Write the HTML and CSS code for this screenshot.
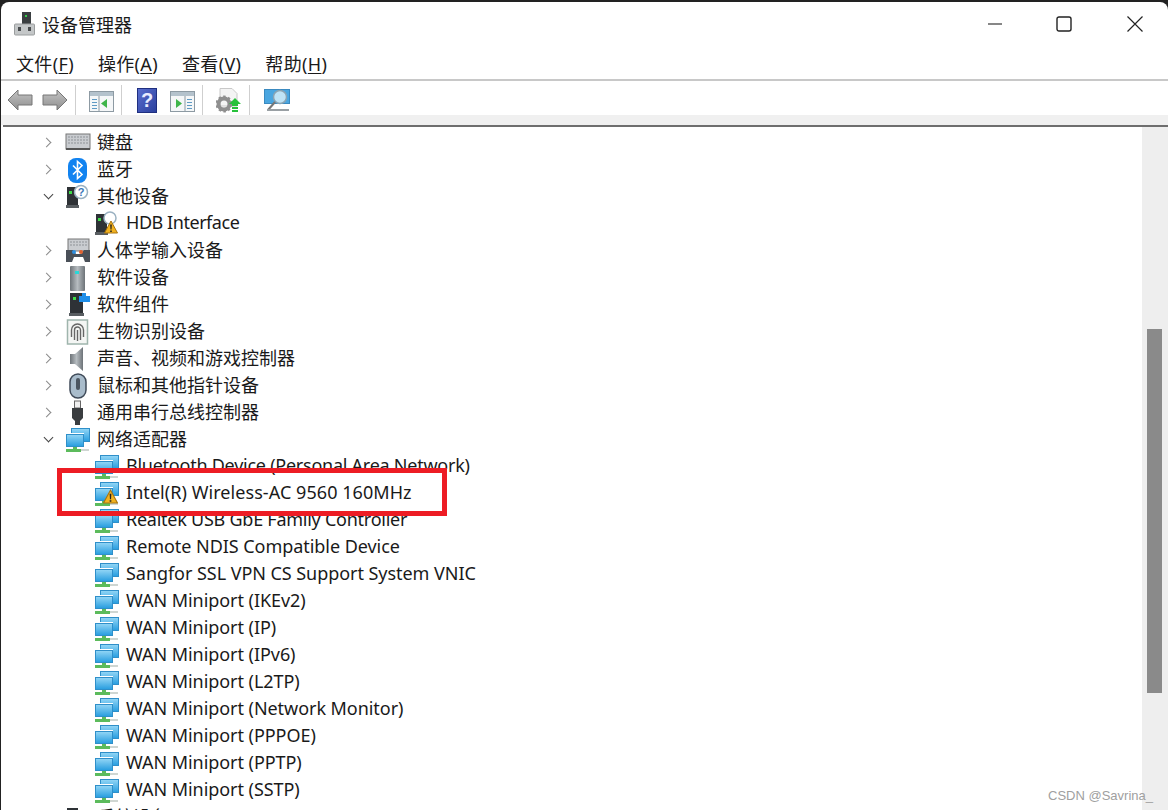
FILE: index.html
```html
<!DOCTYPE html>
<html lang="zh">
<head>
    <meta http-equiv="Content-Type" content="text/html;charset=UTF-8"/>
    <title>设备管理器</title>
    <link rel="stylesheet" href="styles.css">
</head>
<body>
<svg class="defs" width="0" height="0">
    <defs>
        <linearGradient id="screen" x1="0" y1="0" x2="0" y2="1">
            <stop offset="0" stop-color="#8fd4f5"/>
            <stop offset="1" stop-color="#2b9fe0"/>
        </linearGradient>
        <linearGradient id="metal" x1="0" y1="0" x2="1" y2="0">
            <stop offset="0" stop-color="#6d7378"/>
            <stop offset=".5" stop-color="#b6bcc0"/>
            <stop offset="1" stop-color="#6d7378"/>
        </linearGradient>
        <linearGradient id="arrow" x1="0" y1="0" x2="0" y2="1">
            <stop offset="0" stop-color="#c4c4c4"/>
            <stop offset="1" stop-color="#8e8e8e"/>
        </linearGradient>
        <linearGradient id="helpblue" x1="0" y1="0" x2="1" y2="1">
            <stop offset="0" stop-color="#5a6fd0"/>
            <stop offset="1" stop-color="#2a3f9c"/>
        </linearGradient>
        <symbol id="i-net" viewBox="0 0 26 26">
            <rect x="6" y="1" width="19" height="14" fill="#2f8fc9"/>
            <rect x="7" y="2" width="17" height="12" fill="url(#screen)"/>
            <rect x="1" y="6" width="18" height="14" fill="#fff"/>
            <rect x="1" y="7" width="18" height="13" fill="#2f8fc9"/>
            <rect x="2" y="8" width="16" height="11" fill="url(#screen)"/>
            <path d="M8 20h4v2h4v3H1v-3h7z" fill="#5cbb5c"/>
            <path d="M16 22h8v2h-8z" fill="#cfd6d2"/>
        </symbol>
        <symbol id="i-warn" viewBox="0 0 14 13">
            <path d="M7 .5 13.500 12.500H.5z" fill="#f2b21f" stroke="#a87410"/>
            <path d="M6.200 4h1.600l-.3 5h-1zM6.200 10h1.600v1.500H6.200z" fill="#222"/>
        </symbol>
        <symbol id="i-tower" viewBox="0 0 26 26">
            <path d="M2 3h11v18H2z" fill="#2e3236"/>
            <path d="M1 21h13v3H1z" fill="#585d61"/>
            <rect x="4" y="7" width="3" height="3" fill="#3fdc4a"/>
        </symbol>
        <symbol id="i-back" viewBox="0 0 26 22">
            <path d="M1 11 11 1v5h14v10H11v5z" fill="url(#arrow)" stroke="#777"/>
        </symbol>
        <symbol id="i-next" viewBox="0 0 26 22">
            <path d="M25 11 15 1v5H1v10h14v5z" fill="url(#arrow)" stroke="#777"/>
        </symbol>
    </defs>
</svg>

<div class="window">
    <div class="titlebar">
        <svg class="app-icon" width="22" height="24" viewBox="0 0 22 24">
            <rect x="8" y="0" width="9" height="12" fill="#3a3e40"/>
            <rect x="11" y="3" width="2" height="2" fill="#35d04a"/>
            <rect x=".5" y="12" width="20" height="11" rx="1" fill="#c4c7c8" stroke="#9a9d9e"/>
            <rect x="4" y="15" width="3" height="4" fill="#4a4d4f"/>
            <rect x="14" y="15" width="3" height="4" fill="#4a4d4f"/>
        </svg>
        <span class="title">设备管理器</span>
        <div class="win-buttons">
            <svg class="win-min" width="16" height="16" viewBox="0 0 16 16"><path d="M1 8h14" stroke="#111" stroke-width="1.200"/></svg>
            <svg width="16" height="16" viewBox="0 0 16 16"><rect x="1" y="1" width="14" height="14" rx="2" fill="none" stroke="#222" stroke-width="1.400"/></svg>
            <svg width="16" height="16" viewBox="0 0 16 16"><path d="M.5.5l15 15M15.500.5l-15 15" stroke="#222" stroke-width="1.200"/></svg>
        </div>
    </div>

    <div class="menubar">
        <span>文件(<u>F</u>)</span>
        <span>操作(<u>A</u>)</span>
        <span>查看(<u>V</u>)</span>
        <span>帮助(<u>H</u>)</span>
    </div>

    <div class="toolbar">
        <svg class="tool" width="26" height="22"><use href="#i-back"/></svg>
        <svg class="tool tool-next" width="26" height="22"><use href="#i-next"/></svg>
        <i class="sep"></i>
        <svg class="tool tool-pane" width="25" height="21" viewBox="0 0 25 21">
            <rect x=".5" y=".5" width="24" height="20" fill="#f5f7f8" stroke="#8d9aa3"/>
            <rect x="1" y="1" width="23" height="4" fill="#b4c2cc"/>
            <path d="M3 8h5v1H3zM3 11h5v1H3zM3 14h5v1H3zM3 17h5v1H3z" fill="#5f9ac4"/>
            <path d="M10 5v15" stroke="#8d9aa3"/>
            <path d="M18 8v9l-6-4.500z" fill="#3fb54a"/>
        </svg>
        <i class="sep"></i>
        <svg class="tool tool-help" width="20" height="25" viewBox="0 0 20 25">
            <rect x=".5" y=".5" width="19" height="24" fill="url(#helpblue)" stroke="#1f2f80"/>
            <text x="10" y="19" text-anchor="middle" class="help-mark">?</text>
        </svg>
        <svg class="tool tool-pane tool-after" width="25" height="21" viewBox="0 0 25 21">
            <rect x=".5" y=".5" width="24" height="20" fill="#f5f7f8" stroke="#8d9aa3"/>
            <rect x="1" y="1" width="23" height="4" fill="#b4c2cc"/>
            <path d="M17 8h5v1h-5zM17 11h5v1h-5zM17 14h5v1h-5zM17 17h5v1h-5z" fill="#5f9ac4"/>
            <path d="M15 5v15" stroke="#8d9aa3"/>
            <path d="M6 8v9l6-4.500z" fill="#3fb54a"/>
        </svg>
        <i class="sep"></i>
        <svg class="tool" width="26" height="25" viewBox="0 0 26 25">
            <path d="M4 .5h12l5 5V18H4z" fill="#f4f4f4" stroke="#c8c8c8"/>
            <circle cx="8" cy="16" r="5.500" fill="none" stroke="#8f8f8f" stroke-width="4"/>
            <circle cx="8" cy="16" r="7.500" fill="none" stroke="#8f8f8f" stroke-width="2" stroke-dasharray="2.500 2.400"/>
            <path d="M19 10l6 6h-3v2h-6v-2h-3z" fill="#28c13c"/>
            <path d="M16 19h6v2h-6zM16 22h6v2h-6z" fill="#28c13c"/>
        </svg>
        <i class="sep"></i>
        <svg class="tool tool-screen" width="26" height="24" viewBox="0 0 26 24">
            <rect x=".5" y=".5" width="25" height="14" fill="#4aa6e0" stroke="#3a8ac0"/>
            <circle cx="16" cy="8" r="6.500" fill="#bfe3f6" stroke="#8aa4b4" stroke-width="1.500"/>
            <path d="M11 13l-7 8" stroke="#777" stroke-width="2"/>
            <path d="M3 21h22" stroke="#9aa0a4" stroke-width="2"/>
        </svg>
    </div>
    <div class="strip"></div>

    <div class="content">
        <div class="tree">
            <div class="row"><i class="toggle closed"></i><svg class="icon" viewBox="0 0 26 26"><rect x="1" y="4" width="24" height="15" fill="#c9ccd0" stroke="#777"/><path d="M3 7h20M3 10h20M3 13h20" stroke="#8e9297" stroke-dasharray="2 1"/><rect x="1" y="18" width="24" height="2" fill="#555"/></svg><span>键盘</span></div>
            <div class="row"><i class="toggle closed"></i><svg class="icon" viewBox="0 0 26 26"><rect x="3" y="1" width="19" height="25" rx="8" fill="#1283f0"/><path d="M8 8.500l9 9-4.500 4V4.500l4.500 4-9 9" fill="none" stroke="#fff" stroke-width="1.600"/></svg><span>蓝牙</span></div>
            <div class="row"><i class="toggle open"></i><svg class="icon" viewBox="0 0 26 26"><use href="#i-tower" width="26" height="26"/><circle cx="16" cy="8" r="6.500" fill="#fff" stroke="#9bb2c2" stroke-width="1.500"/><text x="16" y="12" text-anchor="middle" class="mini-mark">?</text></svg><span>其他设备</span></div>
            <div class="row child"><svg class="icon" viewBox="0 0 26 26"><use href="#i-tower" width="26" height="26"/><circle cx="16" cy="7" r="6" fill="#fff" stroke="#9bb2c2" stroke-width="1.500"/><use href="#i-warn" x="10" y="9" width="14" height="14"/></svg><span class="tighter">HDB Interface</span></div>
            <div class="row"><i class="toggle closed"></i><svg class="icon" viewBox="0 0 26 26"><rect x="3" y="1" width="21" height="12" fill="#c9ccd0" stroke="#777"/><path d="M5 4h17M5 7h17" stroke="#8e9297" stroke-dasharray="2 1"/><path d="M1 24V12h7l3 4h5l3-4h6v12h-5l-2-5h-9l-2 5z" fill="#4a5058"/><circle cx="9" cy="14" r="2" fill="#2f8fe0"/><circle cx="16" cy="14" r="2" fill="#e0602f"/></svg><span>人体学输入设备</span></div>
            <div class="row"><i class="toggle closed"></i><svg class="icon" viewBox="0 0 26 26"><rect x="5" y="1" width="15" height="25" rx="1" fill="url(#metal)"/><rect x="10" y="6" width="4" height="3" fill="#28d8d8"/></svg><span>软件设备</span></div>
            <div class="row"><i class="toggle closed"></i><svg class="icon" viewBox="0 0 26 26"><path d="M5 1h13v20H5z" fill="#2e3236"/><path d="M4 21h15v3H4z" fill="#585d61"/><rect x="8" y="5" width="3" height="3" fill="#3fdc4a"/><path d="M14 4h3V1h4v3h4v6H14z" fill="#1f8ee8"/></svg><span>软件组件</span></div>
            <div class="row"><i class="toggle closed"></i><svg class="icon" viewBox="0 0 26 26"><rect x="2.500" y="1" width="20" height="24" fill="#f4f6f4" stroke="#9fb5ad" stroke-width="1.500"/><path d="M6.500 18v-7a6 6 0 0 1 12 0v7M9.500 21v-10a3 3 0 0 1 6 0v10M12.500 22V11" fill="none" stroke="#666" stroke-width="1.400"/></svg><span>生物识别设备</span></div>
            <div class="row"><i class="toggle closed"></i><svg class="icon" viewBox="0 0 26 26"><path d="M5 8h5l8-7v24l-8-7H5z" fill="url(#metal)"/></svg><span>声音、视频和游戏控制器</span></div>
            <div class="row"><i class="toggle closed"></i><svg class="icon" viewBox="0 0 26 26"><rect x="5" y="1" width="16" height="24" rx="8" fill="#a9bccb" stroke="#3f4a58" stroke-width="1.500"/><rect x="11" y="5" width="4" height="12" rx="2" fill="#4b5560"/></svg><span>鼠标和其他指针设备</span></div>
            <div class="row"><i class="toggle closed"></i><svg class="icon" viewBox="0 0 26 26"><rect x="9.500" y="1" width="6" height="7" fill="#f0f0f0" stroke="#666"/><path d="M7 8h11v10l-3 3v4h-5v-4l-3-3z" fill="#3a3d40"/></svg><span>通用串行总线控制器</span></div>
            <div class="row"><i class="toggle open"></i><svg class="icon"><use href="#i-net"/></svg><span>网络适配器</span></div>
            <div class="row child"><svg class="icon"><use href="#i-net"/></svg><span class="tight">Bluetooth Device (Personal Area Network)</span></div>
            <div class="row child"><svg class="icon" viewBox="0 0 26 26"><use href="#i-net" width="26" height="26"/><use href="#i-warn" x="9" y="8" width="15" height="15"/></svg><span class="wide">Intel(R) Wireless-AC 9560 160MHz</span></div>
            <div class="row child"><svg class="icon"><use href="#i-net"/></svg><span class="tight">Realtek USB GbE Family Controller</span></div>
            <div class="row child"><svg class="icon"><use href="#i-net"/></svg><span>Remote NDIS Compatible Device</span></div>
            <div class="row child"><svg class="icon"><use href="#i-net"/></svg><span>Sangfor SSL VPN CS Support System VNIC</span></div>
            <div class="row child"><svg class="icon"><use href="#i-net"/></svg><span>WAN Miniport (IKEv2)</span></div>
            <div class="row child"><svg class="icon"><use href="#i-net"/></svg><span>WAN Miniport (IP)</span></div>
            <div class="row child"><svg class="icon"><use href="#i-net"/></svg><span>WAN Miniport (IPv6)</span></div>
            <div class="row child"><svg class="icon"><use href="#i-net"/></svg><span>WAN Miniport (L2TP)</span></div>
            <div class="row child"><svg class="icon"><use href="#i-net"/></svg><span>WAN Miniport (Network Monitor)</span></div>
            <div class="row child"><svg class="icon"><use href="#i-net"/></svg><span>WAN Miniport (PPPOE)</span></div>
            <div class="row child"><svg class="icon"><use href="#i-net"/></svg><span>WAN Miniport (PPTP)</span></div>
            <div class="row child"><svg class="icon"><use href="#i-net"/></svg><span>WAN Miniport (SSTP)</span></div>
            <div class="row"><i class="toggle closed"></i><svg class="icon"><use href="#i-tower"/></svg><span>系统设备</span></div>
        </div>
        <div class="scrollbar"><div class="thumb"></div></div>
    </div>
</div>

<div class="highlight"></div>
<div class="watermark">CSDN @Savrina_</div>
</body>
</html>
```

FILE: styles.css
```css
html, body {
    margin: 0;
    height: 810px;
    overflow: hidden;
    background: #222;
}

body {
    position: relative;
    padding-top: 2px;
    box-sizing: border-box;
    font-family: "Noto Sans", "Noto Sans CJK SC", sans-serif;
    font-size: 18px;
    color: #1a1a1a;
}

.defs {
    position: absolute;
}

.window {
    height: 808px;
    background: #fff;
    border-radius: 8px 8px 0 0;
    margin-left: 1px;
    display: flex;
    flex-direction: column;
    overflow: hidden;
}

.titlebar {
    height: 46px;
    flex: none;
    box-sizing: border-box;
    padding: 0 0 3px 13px;
    display: flex;
    align-items: center;
}

.title {
    margin-left: 6px;
}

.win-buttons {
    margin-left: auto;
    display: flex;
    gap: 55px;
    padding-right: 25px;
}

.win-min {
    margin-right: -2px;
}

.menubar {
    height: 33px;
    flex: none;
    box-sizing: border-box;
    display: flex;
    align-items: center;
    gap: 24px;
    padding: 0 0 2px 15px;
    border-bottom: 2px solid #c8c8c8;
    letter-spacing: .35px;
}

.menubar u {
    text-underline-offset: 2px;
}

.toolbar {
    height: 34px;
    flex: none;
    box-sizing: border-box;
    display: flex;
    align-items: center;
    padding: 4px 0 0 6px;
}

.tool-next {
    margin-left: 9px;
}

.tool-pane {
    margin-top: 3px;
}

.tool-help {
    margin-left: 2px;
}

.tool-after {
    margin-left: 13px;
}

.tool-screen {
    margin: 2px 0 0 1px;
}

.sep {
    width: 1px;
    height: 30px;
    background: #cfcfcf;
    margin: 0 13px 0 7px;
}

.help-mark {
    font-family: "Liberation Sans", sans-serif;
    font-size: 20px;
    font-weight: bold;
    fill: #e8ecff;
}

.mini-mark {
    font-family: "Liberation Sans", sans-serif;
    font-size: 11px;
    font-weight: bold;
    fill: #3a78b8;
}

.strip {
    height: 10px;
    flex: none;
    background: #f0f0f0;
}

.content {
    flex: 1;
    min-height: 0;
    display: flex;
    margin-left: 2px;
    border-top: 2px solid #6e6e6e;
}

.tree {
    flex: 1;
    padding-top: 2px;
    overflow: hidden;
}

.row {
    height: 27px;
    display: flex;
    align-items: center;
    padding-left: 38px;
    white-space: nowrap;
}

.row span {
    padding-bottom: 4px;
}

.row.child {
    padding-left: 91px;
    letter-spacing: -.05px;
}

.row span.tight {
    letter-spacing: -.25px;
}

.row span.tighter {
    letter-spacing: -.45px;
}

.row span.wide {
    letter-spacing: .06px;
}

.toggle {
    width: 14px;
    height: 14px;
    margin-right: 10px;
    flex: none;
    position: relative;
}

.toggle::before {
    content: "";
    position: absolute;
    width: 6px;
    height: 6px;
    border-right: 1.500px solid #8a8a8a;
    border-bottom: 1.500px solid #8a8a8a;
    left: 2px;
    top: 3px;
    transform: rotate(-45deg);
}

.toggle.open::before {
    border-color: #444;
    left: 4px;
    top: 1px;
    transform: rotate(45deg);
}

.icon {
    width: 26px;
    height: 26px;
    margin-right: 6px;
    flex: none;
}

.scrollbar {
    width: 26px;
    flex: none;
    background: #eee;
}

.thumb {
    width: 15px;
    height: 364px;
    margin: 202px 0 0 5px;
    background: #8a8a8a;
}

.highlight {
    position: absolute;
    left: 57px;
    top: 468px;
    width: 390px;
    height: 48px;
    box-sizing: border-box;
    border: 5px solid #ed1c24;
}

.watermark {
    position: absolute;
    right: 15px;
    bottom: 7px;
    font-family: "Liberation Sans", sans-serif;
    font-size: 13px;
    color: #a0a0a0;
}
```
